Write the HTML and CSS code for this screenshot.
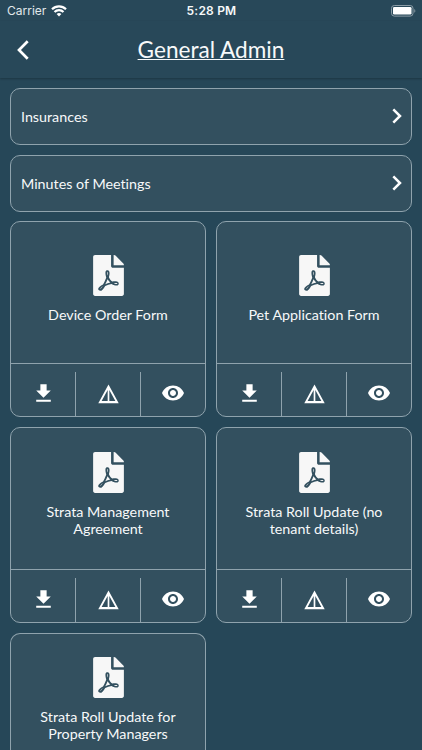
FILE: index.html
```html
<!DOCTYPE html>
<html lang="en">

<head>
    <meta charset="UTF-8">
    <meta name="viewport" content="width=device-width, initial-scale=1.0">
    <title>General Admin</title>
    <link rel="stylesheet" href="styles.css">
</head>

<body>
    <!-- Shared icons -->
    <svg class="icon-defs" width="0" height="0">
        <symbol id="icon-pdf" viewBox="0 0 384 512">
            <path d="M181.9 256.1c-5-16-4.9-46.9-2-46.9 8.4 0 7.6 36.9 2 46.9zm-1.7 47.2c-7.7 20.2-17.3 43.3-28.4 62.7 18.3-7 39-17.2 62.9-21.9-12.7-9.6-24.9-23.4-34.5-40.8zM86.1 428.1c0 .8 13.2-5.4 34.9-40.2-6.7 6.3-29.1 24.5-34.9 40.2zM248 160h136v328c0 13.3-10.7 24-24 24H24c-13.3 0-24-10.7-24-24V24C0 10.7 10.7 0 24 0h200v136c0 13.2 10.8 24 24 24zm-8 171.8c-20-12.2-33.3-29-42.7-53.8 4.5-18.5 11.6-46.6 6.2-64.2-4.7-29.4-42.4-26.5-47.8-6.8-5 18.3-.4 44.1 8.1 77-11.6 27.6-28.7 64.6-40.8 85.8-.1 0-.1.1-.2.1-27.1 13.9-73.6 44.5-54.5 68 5.6 6.9 16 10 21.5 10 17.9 0 35.7-18 61.1-61.8 25.8-8.5 54.1-19.1 79-23.2 21.7 11.8 47.1 19.5 64 19.5 29.2 0 31.2-32 19.7-43.4-13.9-13.6-54.3-9.7-73.6-7.2zM377 105L279 7c-4.5-4.5-10.6-7-17-7h-6v128h128v-6.1c0-6.3-2.5-12.4-7-16.9zm-74.1 255.3c4.1-2.7-2.5-11.9-42.8-9 37.1 15.8 42.8 9 42.8 9z"/>
        </symbol>
        <symbol id="icon-download" viewBox="0 0 24 24">
            <path d="M19 9h-4V3H9v6H5l7 7 7-7zM5 18v2h14v-2H5z"/>
        </symbol>
        <symbol id="icon-details" viewBox="0 0 24 24">
            <path fill-rule="evenodd" d="M12 3.3L2.2 21.3h19.6zM11.2 8.6v10.6H5.4zM12.8 8.6l5.8 10.6h-5.8z"/>
        </symbol>
        <symbol id="icon-eye" viewBox="0 0 24 24">
            <path d="M12 4.5C7 4.5 2.73 7.61 1 12c1.73 4.39 6 7.5 11 7.5s9.27-3.11 11-7.5c-1.73-4.39-6-7.5-11-7.5zM12 17c-2.76 0-5-2.24-5-5s2.24-5 5-5 5 2.24 5 5-2.24 5-5 5zm0-8c-1.66 0-3 1.34-3 3s1.34 3 3 3 3-1.34 3-3-1.34-3-3-3z"/>
        </symbol>
        <symbol id="icon-chevron" viewBox="0 0 10 16">
            <path d="M1.3 1.3L8 8l-6.7 6.7" fill="none" stroke="#fff" stroke-width="2.5"/>
        </symbol>
    </svg>

    <div class="status-bar">
        <div class="carrier">
            <span>Carrier</span>
            <svg class="wifi" viewBox="0 0 16 12">
                <path d="M8 11.6L5.6 9.1a3.5 3.5 0 0 1 4.8 0z"/>
                <path d="M3.5 7a6.4 6.4 0 0 1 9 0" fill="none" stroke="#fff" stroke-width="2.2"/>
                <path d="M1 4.2a10 10 0 0 1 14 0" fill="none" stroke="#fff" stroke-width="2.2"/>
            </svg>
        </div>
        <div class="time">5:28 PM</div>
        <div class="battery-wrap">
            <svg class="battery" viewBox="0 0 25 12">
                <rect x=".5" y=".5" width="21.5" height="10.6" rx="2.8" fill="none" stroke="#8b9ca6"/>
                <rect x="2" y="2" width="18.5" height="7.6" rx="1.3"/>
                <path d="M23.3 4v3.8c1.4-.5 1.4-3.3 0-3.8z" fill="#8b9ca6"/>
            </svg>
        </div>
    </div>

    <header class="header">
        <svg class="back" viewBox="0 0 12 20"><path d="M10.7 1.2L2 10l8.7 8.8" fill="none" stroke="#fff" stroke-width="2.7"/></svg>
        <h1>General Admin</h1>
    </header>

    <main class="content">
        <div class="folder">
            <span>Insurances</span>
            <svg class="chevron"><use href="#icon-chevron"/></svg>
        </div>
        <div class="folder">
            <span>Minutes of Meetings</span>
            <svg class="chevron"><use href="#icon-chevron"/></svg>
        </div>

        <div class="documents">
            <div class="card">
                <div class="card-body">
                    <svg class="pdf"><use href="#icon-pdf"/></svg>
                    <p>Device Order Form</p>
                </div>
                <div class="actions">
                    <div class="action"><svg class="download"><use href="#icon-download"/></svg></div>
                    <div class="action"><svg class="details"><use href="#icon-details"/></svg></div>
                    <div class="action"><svg class="eye"><use href="#icon-eye"/></svg></div>
                </div>
            </div>

            <div class="card">
                <div class="card-body">
                    <svg class="pdf"><use href="#icon-pdf"/></svg>
                    <p>Pet Application Form</p>
                </div>
                <div class="actions">
                    <div class="action"><svg class="download"><use href="#icon-download"/></svg></div>
                    <div class="action"><svg class="details"><use href="#icon-details"/></svg></div>
                    <div class="action"><svg class="eye"><use href="#icon-eye"/></svg></div>
                </div>
            </div>

            <div class="card">
                <div class="card-body">
                    <svg class="pdf"><use href="#icon-pdf"/></svg>
                    <p>Strata Management<br>Agreement</p>
                </div>
                <div class="actions">
                    <div class="action"><svg class="download"><use href="#icon-download"/></svg></div>
                    <div class="action"><svg class="details"><use href="#icon-details"/></svg></div>
                    <div class="action"><svg class="eye"><use href="#icon-eye"/></svg></div>
                </div>
            </div>

            <div class="card">
                <div class="card-body">
                    <svg class="pdf"><use href="#icon-pdf"/></svg>
                    <p>Strata Roll Update (no<br>tenant details)</p>
                </div>
                <div class="actions">
                    <div class="action"><svg class="download"><use href="#icon-download"/></svg></div>
                    <div class="action"><svg class="details"><use href="#icon-details"/></svg></div>
                    <div class="action"><svg class="eye"><use href="#icon-eye"/></svg></div>
                </div>
            </div>

            <div class="card">
                <div class="card-body">
                    <svg class="pdf"><use href="#icon-pdf"/></svg>
                    <p>Strata Roll Update for<br>Property Managers</p>
                </div>
            </div>
        </div>
    </main>
</body>

</html>
```

FILE: styles.css
```css
* {
    box-sizing: border-box;
}

body {
    margin: 0;
    height: 750px;
    overflow: hidden;
    background: #264758;
    color: #f7f9fa;
    font-family: Lato, sans-serif;
    font-size: 14.3px;
    font-variant-ligatures: none;
}

svg {
    display: block;
    flex-shrink: 0;
    fill: #fff;
}

.icon-defs {
    display: none;
}

/* Status bar */
.status-bar {
    display: grid;
    grid-template-columns: 1fr auto 1fr;
    align-items: center;
    height: 21px;
    padding: 0 6px 0 7px;
    background: #284859;
    font-family: Inter, sans-serif;
    font-size: 12px;
}

.carrier {
    display: flex;
    align-items: center;
    gap: 5px;
    color: #e2e8eb;
}

.wifi {
    width: 16px;
    height: 12px;
}

.time {
    font-weight: 600;
    letter-spacing: 0.2px;
}

.battery-wrap {
    display: flex;
    justify-content: flex-end;
}

.battery {
    width: 25px;
    height: 12px;
}

/* Header */
.header {
    display: grid;
    grid-template-columns: 40px 1fr 40px;
    align-items: center;
    height: 57px;
    background: #284859;
    box-shadow: 0 1px 2px rgba(0, 0, 0, 0.25);
}

.back {
    width: 12px;
    height: 20px;
    margin-left: 17px;
}

.header h1 {
    margin: 0;
    font-size: 22.6px;
    font-weight: 400;
    line-height: 28px;
    text-align: center;
    text-decoration: underline;
    text-decoration-thickness: 1px;
}

/* Folder rows */
.content {
    padding: 10px 10px 0;
}

.folder {
    display: flex;
    align-items: center;
    justify-content: space-between;
    height: 57px;
    margin-bottom: 10px;
    padding: 0 9px 1px 10px;
    background: #33505f;
    border: 1px solid #8fa3ad;
    border-radius: 10px;
}

.chevron {
    width: 10px;
    height: 16px;
}

/* Document cards */
.documents {
    display: grid;
    grid-template-columns: 1fr 1fr;
    gap: 10px;
    margin-top: -1px;
}

.card {
    display: flex;
    flex-direction: column;
    height: 196px;
    background: #33505f;
    border: 1px solid #8fa3ad;
    border-radius: 10px;
}

/* The last card is cut off by the bottom of the screen */
.card:last-child {
    height: 117px;
    border-bottom: 0;
    border-radius: 10px 10px 0 0;
}

.card-body {
    flex: 1;
    display: flex;
    flex-direction: column;
    align-items: center;
    justify-content: center;
    padding-bottom: 8px;
}

.card:last-child .card-body {
    justify-content: flex-start;
    padding: 23px 0 0;
}

.pdf {
    width: 31px;
    height: 41px;
    fill: #f7f7f7;
}

.card-body p {
    margin: 10px 0 0;
    line-height: 17px;
    text-align: center;
}

.actions {
    display: flex;
    height: 53px;
    padding-top: 8px;
    border-top: 1px solid #8fa3ad;
}

.action {
    flex: 1;
    display: flex;
    justify-content: center;
    padding-top: 9px;
}

.action + .action {
    border-left: 1px solid #8fa3ad;
}

.download,
.details {
    width: 25px;
    height: 25px;
}

.eye {
    width: 24px;
    height: 24px;
}
```
